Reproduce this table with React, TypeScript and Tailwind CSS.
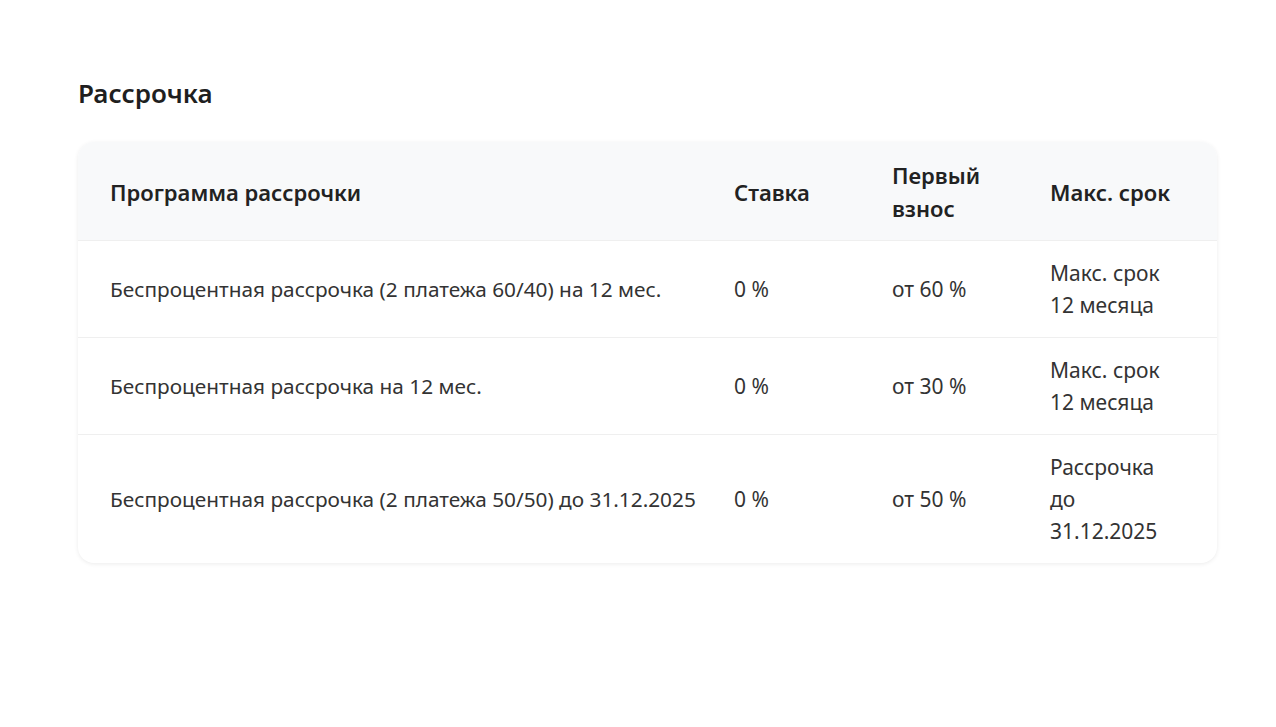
const rows = [
  {
    name: 'Беспроцентная рассрочка (2 платежа 60/40) на 12 мес.',
    rate: '0 %',
    down: 'от 60 %',
    term: 'Макс. срок 12 месяца',
  },
  {
    name: 'Беспроцентная рассрочка на 12 мес.',
    rate: '0 %',
    down: 'от 30 %',
    term: 'Макс. срок 12 месяца',
  },
  {
    name: 'Беспроцентная рассрочка (2 платежа 50/50) до 31.12.2025',
    rate: '0 %',
    down: 'от 50 %',
    term: 'Рассрочка до 31.12.2025',
  },
]

export default function App() {
  return (
    <div className="min-h-screen bg-white font-['Noto_Sans',sans-serif] text-[#222]">
      <div className="px-[78px] pt-[74px]">
        <h2 className="text-[26px] leading-[38px] font-semibold text-[#1f1f1f]">Рассрочка</h2>

        <div className="mt-[30px] w-[1139px] rounded-2xl bg-white shadow-[0_1px_4px_rgba(0,0,0,0.08)] overflow-hidden">
          <table className="w-full table-fixed border-collapse">
            <colgroup>
              <col className="w-[624px]" />
              <col className="w-[158px]" />
              <col className="w-[158px]" />
              <col />
            </colgroup>
            <thead>
              <tr className="bg-[#f8f9fa]">
                <th className="pl-8 pr-1 pt-[17px] pb-[15px] text-left align-middle text-[22px] leading-[33px] font-semibold">Программа рассрочки</th>
                <th className="px-8 pt-[17px] pb-[15px] text-left align-middle text-[22px] leading-[33px] font-semibold">Ставка</th>
                <th className="px-8 pt-[17px] pb-[15px] text-left align-middle text-[22px] leading-[33px] font-semibold">Первый взнос</th>
                <th className="pl-8 pr-[40px] pt-[17px] pb-[15px] text-left align-middle text-[22px] leading-[33px] font-semibold">Макс. срок</th>
              </tr>
            </thead>
            <tbody>
              {rows.map((r) => (
                <tr key={r.name} className="border-t border-[#efefef]">
                  <td className="pl-8 pr-1 py-4 align-middle whitespace-nowrap text-[20.8px] leading-8 text-[#333]">{r.name}</td>
                  <td className="px-8 py-4 align-middle text-[21px] leading-8 text-[#333]">{r.rate}</td>
                  <td className="px-8 py-4 align-middle text-[21px] leading-8 text-[#333]">{r.down}</td>
                  <td className="pl-8 pr-[40px] py-4 align-middle text-[21px] leading-8 text-[#333]">{r.term}</td>
                </tr>
              ))}
            </tbody>
          </table>
        </div>
      </div>
    </div>
  )
}
